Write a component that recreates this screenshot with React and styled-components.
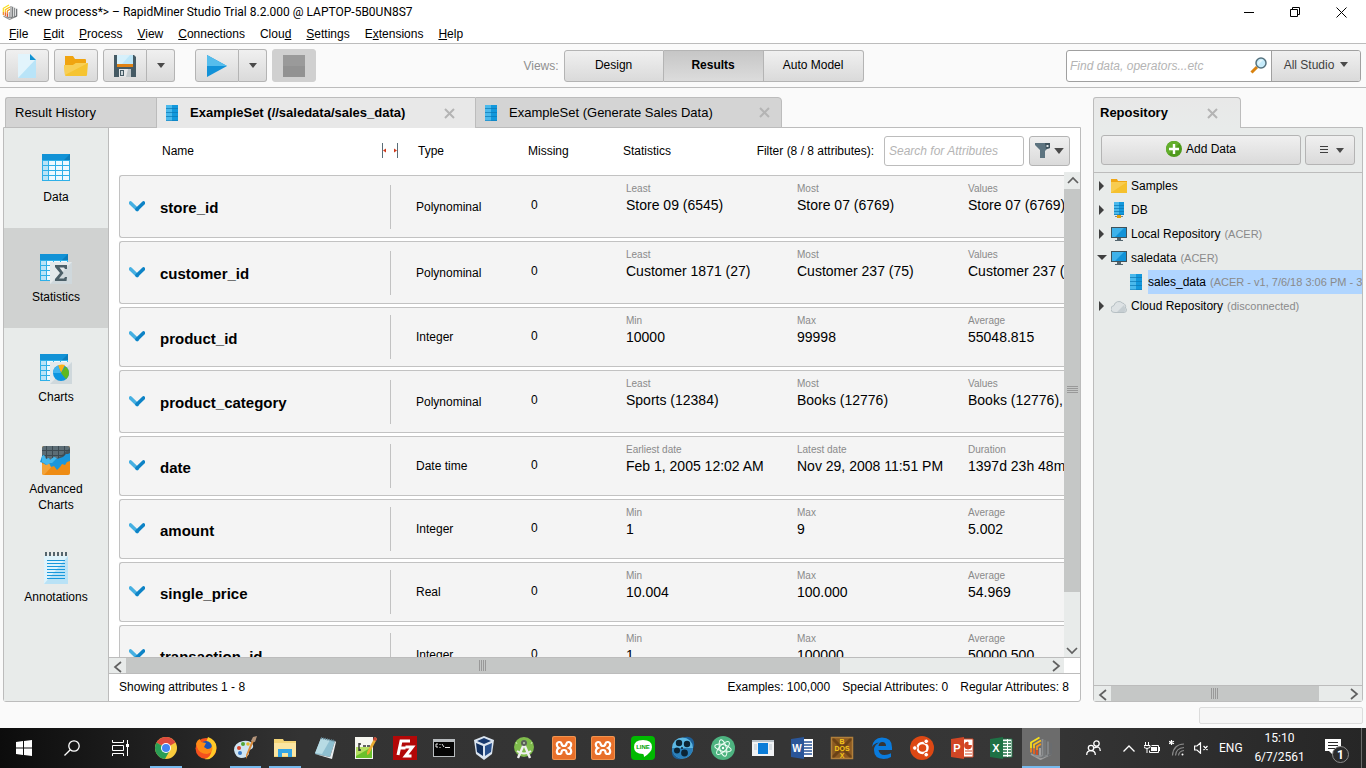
import styled, { createGlobalStyle, css } from 'styled-components';

const menus = [
  ['', 'F', 'ile'],
  ['', 'E', 'dit'],
  ['', 'P', 'rocess'],
  ['', 'V', 'iew'],
  ['', 'C', 'onnections'],
  ['Clou', 'd', ''],
  ['', 'S', 'ettings'],
  ['E', 'x', 'tensions'],
  ['', 'H', 'elp'],
];

const attributes = [
  {
    name: 'store_id',
    type: 'Polynominal',
    stats: [
      ['Least', 'Store 09 (6545)'],
      ['Most', 'Store 07 (6769)'],
      ['Values', 'Store 07 (6769)'],
    ],
  },
  {
    name: 'customer_id',
    type: 'Polynominal',
    stats: [
      ['Least', 'Customer 1871 (27)'],
      ['Most', 'Customer 237 (75)'],
      ['Values', 'Customer 237 (75)'],
    ],
  },
  {
    name: 'product_id',
    type: 'Integer',
    stats: [
      ['Min', '10000'],
      ['Max', '99998'],
      ['Average', '55048.815'],
    ],
  },
  {
    name: 'product_category',
    type: 'Polynominal',
    stats: [
      ['Least', 'Sports (12384)'],
      ['Most', 'Books (12776)'],
      ['Values', 'Books (12776),'],
    ],
  },
  {
    name: 'date',
    type: 'Date time',
    stats: [
      ['Earliest date', 'Feb 1, 2005 12:02 AM'],
      ['Latest date', 'Nov 29, 2008 11:51 PM'],
      ['Duration', '1397d 23h 48m'],
    ],
  },
  {
    name: 'amount',
    type: 'Integer',
    stats: [
      ['Min', '1'],
      ['Max', '9'],
      ['Average', '5.002'],
    ],
  },
  {
    name: 'single_price',
    type: 'Real',
    stats: [
      ['Min', '10.004'],
      ['Max', '100.000'],
      ['Average', '54.969'],
    ],
  },
  {
    name: 'transaction_id',
    type: 'Integer',
    stats: [
      ['Min', '1'],
      ['Max', '100000'],
      ['Average', '50000.500'],
    ],
  },
];

/* ---------- icons ---------- */

const LogoIcon = ({ size = 16 }) => (
  <svg width={size} height={size} viewBox='0 0 24 24' fill='none' strokeWidth='1.800'>
    <path d='M2 12V6.500L10.500 1.500' stroke='#f8e01c' />
    <path d='M2 12v4.500' stroke='#f08a1c' />
    <path d='M5 12.500V8.500L12 4.500' stroke='#fbc31a' />
    <path d='M5 12.500V18' stroke='#e8641e' />
    <path d='M8 14v-3.500L12 8' stroke='#f3941c' />
    <path d='M8 14v5.500' stroke='#dc4a20' />
    <path d='M11 12v8' stroke='#a8a8a8' />
    <path d='M2 18l9.500 5.200L22 18' stroke='#9c9c9c' />
    <path d='M5 19.500l6.500 1 2-1V3' stroke='#8c8e90' />
    <path d='M13 21.500l3-2V4' stroke='#75787a' />
    <path d='M16 20.500l3-1.500V5.500' stroke='#85888a' />
    <path d='M19 19.500l3-1.500V7' stroke='#6a6d70' />
  </svg>
);

const NewIcon = () => (
  <svg width='18' height='24' viewBox='0 0 18 24'>
    <path d='M0 0h12l6 6v18H0z' fill='#b9e4f8' />
    <path d='M0 0h12l5 6L0 24z' fill='#e2f4fc' />
    <path d='M12 0l6 6h-6z' fill='#1292d2' />
  </svg>
);

const OpenIcon = () => (
  <svg width='24' height='20' viewBox='0 0 24 20'>
    <path d='M1 0h8l2 3h10q1 0 1 1v14H1z' fill='#f0a410' />
    <path d='M0 9h9l3-2h12l-1 12q0 1-1 1H2q-1 0-1-1z' fill='#f6c431' />
    <path d='M0 9h9l3-2h12L1 19z' fill='#f8cf55' />
  </svg>
);

const SaveIcon = () => (
  <svg width='22' height='22' viewBox='0 0 22 22'>
    <path d='M0 0h20l2 2v20H0z' fill='#455a64' />
    <path d='M3 0h16v9H3z' fill='#bde6f8' />
    <path d='M3 0h13L8 9H3z' fill='#d6f0fb' />
    <path d='M3 9h16v3H3z' fill='#e08214' />
    <path d='M5 14h12v8H5z' fill='#e5e7e8' />
    <path d='M6 15h4v6H6z' fill='#455a64' />
    <path d='M7 16h2v4H7z' fill='#cfd8dc' />
    <path d='M14 14h3v8h-5z' fill='#bfc6c9' />
  </svg>
);

const PlayIcon = () => (
  <svg width='20' height='22' viewBox='0 0 20 22'>
    <path d='M0 0l20 11L0 22z' fill='#1292d8' />
    <path d='M0 0l20 11H0z' fill='#56bdec' />
  </svg>
);

const StopIcon = () => (
  <svg width='22' height='22' viewBox='0 0 22 22'>
    <path d='M0 0h22v22H0z' fill='#929292' />
    <path d='M0 0h22v11H0z' fill='#9a9a9a' />
  </svg>
);

const Caret = ({ width = 8 }) => (
  <svg width={width} height={width === 8 ? 5 : 6} viewBox='0 0 8 5'>
    <path d='M0 0h8L4 5z' fill='#4a4a4a' />
  </svg>
);

const CloseIcon = () => (
  <svg width='11' height='11' viewBox='0 0 11 11' fill='none' stroke='#b4b4b4' strokeWidth='2'>
    <path d='M1 1l9 9M10 1l-9 9' />
  </svg>
);

const StackIcon = () => (
  <svg width='12' height='16' viewBox='0 0 12 16'>
    <path d='M0 0h12v16H0z' fill='#1398dc' />
    <path d='M0 0h6v16H0z' fill='#4ab9ec' />
    <path d='M0 3.500h12M0 7.500h12M0 11.500h12' stroke='#0b78b4' strokeOpacity='.7' />
    <path d='M0 15.500h12' stroke='#0b78b4' strokeOpacity='.5' />
  </svg>
);

const SearchIcon = () => (
  <svg width='17' height='17' viewBox='0 0 17 17'>
    <path d='M1.500 15.500L7 10' stroke='#d9820f' strokeWidth='3' />
    <circle cx='11' cy='6' r='5' fill='#c6ebfa' stroke='#55727f' strokeWidth='1.500' />
    <path d='M8 8a4 4 0 0 1 5-5z' fill='#e6f7fd' />
  </svg>
);

const GridBase = () => (
  <>
    <path d='M0 0h28v27H0z' fill='#2fb0e8' />
    <path d='M0 0h28v6H0z' fill='#1192d6' />
    <path d='M22 6l6-6v6z' fill='#0b7dbb' />
    <path d='M1 7h5v4H1zM1 12h5v4H1zM1 17h5v4H1zM1 22h5v4H1z' fill='#b9e4f7' />
    <path
      d='M7 7h6v4H7zM14 7h6v4h-6zM21 7h6v4h-6zM7 12h6v4H7zM14 12h6v4h-6zM21 12h6v4h-6zM7 17h6v4H7zM14 17h6v4h-6zM21 17h6v4h-6zM7 22h6v4H7zM14 22h6v4h-6zM21 22h6v4h-6z'
      fill='#eefaff'
    />
  </>
);

const DataIcon = () => (
  <svg width='32' height='32' viewBox='-2 -2 32 32'>
    <GridBase />
  </svg>
);

const StatisticsIcon = () => (
  <svg width='32' height='32' viewBox='0 -2 32 32'>
    <GridBase />
    <path d='M10 8h22v22H10z' fill='#cfd8dc' />
    <path d='M10 8h22L10 30z' fill='#e4e9eb' />
    <path d='M15 11h12v4h-2l-1-1.500h-4.500l4 5.500-4.500 5.500h5L25 23h2l-.5 4H15v-2l5-6-5-6z' fill='#4b5f68' />
  </svg>
);

const ChartsIcon = () => (
  <svg width='32' height='32' viewBox='0 -2 32 32'>
    <GridBase />
    <path d='M10 8h22v22H10z' fill='#cfd8dc' />
    <path d='M10 8h22L10 30z' fill='#e4e9eb' />
    <circle cx='21' cy='19' r='8' fill='#0d95e0' />
    <path d='M21 19l-3-7.400a8 8 0 0 1 7-.6z' fill='#fbb117' />
    <path d='M21 19l4.500-6.600a8 8 0 0 1 .5 12.800z' fill='#5fb81f' />
    <path d='M21 19h-8a8 8 0 0 1 5-7.400z' fill='#43b4ee' />
  </svg>
);

const AdvancedIcon = () => (
  <svg width='32' height='32' viewBox='-2 -2 32 32'>
    <rect width='28' height='29' rx='2' fill='#ee8c14' />
    <path d='M0 18v9q0 2 2 2L13 17z' fill='#f3a338' />
    <path d='M2 0h24q2 0 2 2v12H0V2q0-2 2-2z' fill='#5c6d76' />
    <path d='M28 2v12H14z' fill='#46555d' />
    <path d='M0 4.500h28M0 9.500h28M4.500 0v13M10.500 0v13M16.500 0v13M22.500 0v13' stroke='#3c4a52' />
    <path
      d='M0 10l2-1 2 4 3-1 1 2 4-3 3 2 3-1 3-1 3-3 2 0 2-1v8l-3 1-2 3-3-1-2 3-3 3-3-4-3 1-2-4-3 2-3-2-3-1z'
      fill='#1b97dc'
    />
    <path d='M0 10l2-1 2 4 3-1 1 2 4-3 3 1-5 5-2 0-3 2-3-2-2-1z' fill='#45b7ec' />
  </svg>
);

const NotesIcon = () => (
  <svg width='24' height='32' viewBox='0 0 24 32'>
    <path d='M0 4h24v28H0z' fill='#b9e2f6' />
    <path d='M0 4h24L0 32z' fill='#def3fc' />
    <path d='M2 0v4M6 0v4M10 0v4M14 0v4M18 0v4M22 0v4' stroke='#55656d' strokeWidth='2' />
    <path
      d='M3 8.500h18M3 11.500h18M3 14.500h18M3 17.500h18M3 20.500h18M3 23.500h18M3 26.500h18'
      stroke='#1798dc'
    />
  </svg>
);

const ChevronIcon = () => (
  <svg width='16' height='11' viewBox='0 0 16 11' fill='none' strokeWidth='3.600'>
    <path d='M1.500 2L8.300 8.500' stroke='#46b0e2' strokeLinecap='round' />
    <path d='M14.500 2L8 8.300' stroke='#0d83c6' strokeLinecap='round' />
  </svg>
);

const ResizeIcon = () => (
  <svg width='16' height='15' viewBox='0 0 16 15'>
    <path d='M.5 0v15M15.500 0v15' stroke='#5a6e78' />
    <path d='M1 7.500l3-2v4zM15 7.500l-3-2v4z' fill='#cf3a1c' />
  </svg>
);

const FunnelIcon = () => (
  <svg width='15' height='15' viewBox='0 0 15 15'>
    <path d='M0 0h15v5l-3 1-2 2v7H5V7L0 2z' fill='#5d7480' />
    <path d='M10 0h5v5l-4 1z' fill='#3f525c' />
    <path d='M11.500 2h2v2h-2z' fill='#dfe5e8' />
  </svg>
);

const PlusIcon = () => (
  <svg width='16' height='16' viewBox='0 0 16 16'>
    <circle cx='8' cy='8' r='8' fill='#4e9a1c' />
    <path d='M2.300 13.700A8 8 0 0 1 13.700 2.300z' fill='#63ae2c' />
    <path d='M8 3v10M3 8h10' stroke='#fff' strokeWidth='2.400' />
  </svg>
);

const FolderIcon = () => (
  <svg width='16' height='14' viewBox='0 0 16 14'>
    <path d='M0 0h6l1 2h9v12H0z' fill='#f0a614' />
    <path d='M0 3h16v11H0z' fill='#f5c12e' />
    <path d='M0 3h16L1 13H0z' fill='#f8cc50' />
  </svg>
);

const DbIcon = () => (
  <svg width='16' height='16' viewBox='0 0 16 16'>
    <path d='M3 0h10v13H3z' fill='#1398dc' />
    <path d='M3 0h5v13H3z' fill='#4ab9ec' />
    <path d='M3 3.500h10M3 6.500h10M3 9.500h10M3 12.500h10' stroke='#0b78b4' strokeOpacity='.7' />
    <path d='M4 14.500h8' stroke='#7a868c' />
    <path d='M6 13h4v3H6z' fill='#e0a010' />
  </svg>
);

const ScreenIcon = () => (
  <svg width='16' height='14' viewBox='0 0 16 14'>
    <path d='M0 0h16v11H0z' fill='#3f525b' />
    <path d='M1 1h14v9H1z' fill='#1293d8' />
    <path d='M1 1h12L4 10H1z' fill='#3fb2ea' />
    <path d='M6 11h4v2h2v1H4v-1h2z' fill='#54656e' />
  </svg>
);

const CloudIcon = () => (
  <svg width='16' height='13' viewBox='0 0 16 13'>
    <path
      d='M4 12.500a3.500 3.500 0 0 1-1-7A5 5 0 0 1 11.500 3a4 4 0 0 1 3 5 2.500 2.500 0 0 1-1 4.500z'
      fill='#dde2e4'
      stroke='#b7c0c4'
    />
    <path d='M13 5L6 12h7q3-1 1-4z' fill='#c6ced2' />
  </svg>
);

const Arrow = ({ dir }) => {
  const d = {
    up: 'M1 8l5-5 5 5',
    down: 'M1 4l5 5 5-5',
    left: 'M9 1L3 6l6 5',
    right: 'M3 1l6 5-6 5',
  }[dir];
  return (
    <svg width='12' height='12' viewBox='0 0 12 12' fill='none' stroke='#606060' strokeWidth='1.700'>
      <path d={d} />
    </svg>
  );
};

const TreeArrow = ({ open }) => (
  <svg width='10' height='10' viewBox='0 0 10 10'>
    <path d={open ? 'M0 2h10L5 7z' : 'M2 0l5 5-5 5z'} fill='#3f3f3f' />
  </svg>
);

/* ---------- task bar icons ---------- */

const TaskIcon = ({ children }) => (
  <svg width='24' height='24' viewBox='0 0 24 24'>
    {children}
  </svg>
);

const Xampp = () => (
  <TaskIcon>
    <rect width='24' height='24' rx='2' fill='#f0934e' />
    <rect x='1' y='1' width='22' height='22' rx='1.500' fill='#e8702a' />
    <path
      d='M9.500 7.500Q9 5.800 7 6 4.800 6.300 4.800 8.800q0 2.200 2 3.200-2 1-2 3.200Q4.800 18 7.300 18q2.200 0 2.200-1.700 0-2.300 2.500-2.300t2.500 2.300q0 1.700 2.200 1.700 2.500 0 2.500-2.800 0-2.200-2-3.200 2-1 2-3.200 0-2.500-2.200-2.800-2-.2-2.500 1.500-.3 2.500-2.500 2.500T9.500 7.500z'
      fill='none'
      stroke='#fff'
      strokeWidth='2.200'
    />
  </TaskIcon>
);

const tasks = [
  {
    name: 'Chrome',
    running: true,
    icon: (
      <TaskIcon>
        <circle cx='12' cy='12' r='11' fill='#f9cb3c' />
        <path d='M12 12L2.500 6.500a11 11 0 0 1 19 0z' fill='#dd4b3e' />
        <path d='M2.500 6.500A11 11 0 0 0 11 23l4.500-8L12 12z' fill='#2a9e56' />
        <circle cx='12' cy='12' r='5' fill='#fff' />
        <circle cx='12' cy='12' r='4' fill='#4385f2' />
      </TaskIcon>
    ),
  },
  {
    name: 'Firefox',
    icon: (
      <TaskIcon>
        <circle cx='12' cy='12.500' r='10.500' fill='#f5511e' />
        <path d='M14 1q8 3 8.500 10 0 8-7 12-3 .5-5 0 7-2 7-9 0-6-5-9z' fill='#ffc928' />
        <circle cx='12' cy='11' r='6' fill='#1c54b8' />
        <path d='M2 8q1-4 4-5l1 3 5 1-2 4 3 2q5 0 5-4 2 8-5 9-8 0-10-7z' fill='#ff8a16' />
      </TaskIcon>
    ),
  },
  {
    name: 'Paint',
    running: true,
    icon: (
      <TaskIcon>
        <path d='M1 14q0-7 9-9 8-1 10 4 1 4-4 5-1 1 0 4-2 4-8 4-6-1-7-8z' fill='#cfe4f2' />
        <circle cx='6' cy='12' r='2' fill='#d6452c' />
        <circle cx='10' cy='8' r='2' fill='#52a637' />
        <circle cx='15' cy='8' r='1.800' fill='#e9b92d' />
        <circle cx='7' cy='17' r='2' fill='#3777c4' />
        <path d='M21 5l-7 16-1 2 0-4 6-15z' fill='#d98a3b' />
        <path d='M18 5l2-4 4-1-2 6z' fill='#b4947a' />
      </TaskIcon>
    ),
  },
  {
    name: 'File Explorer',
    running: true,
    icon: (
      <TaskIcon>
        <path d='M1 3h9l1 2h12v16H1z' fill='#f3d477' />
        <path d='M1 7h22v13H1z' fill='#fbe5a1' />
        <path d='M5 21v-8h14v8h-4v-4H9v4z' fill='#33a5e6' />
      </TaskIcon>
    ),
  },
  {
    name: 'Notepad',
    icon: (
      <TaskIcon>
        <path d='M8 2l14 3-5 16-15-3z' fill='#8ebfd0' />
        <path d='M8 2l9 2-8 14-7-1z' fill='#b7dbe4' />
        <path d='M2 18l15 3 5-16 1 1-4 17z' fill='#e9eef0' />
        <path d='M8 2l14 3' stroke='#5e7f8e' strokeWidth='2' strokeDasharray='1 1' />
      </TaskIcon>
    ),
  },
  {
    name: 'Notepad++',
    icon: (
      <TaskIcon>
        <path d='M2 1h18v22H2z' fill='#f6f6f0' />
        <path d='M3 11h16v11H3z' fill='#6ac12c' />
        <path d='M3 11h16L3 20z' fill='#b5df62' />
        <path d='M6 7v8M6 8h2M6 14h2M10 10h3M14 10h3' stroke='#303030' strokeWidth='1.400' />
        <path d='M22 1l2 2-8 15-2 1 0-3z' fill='#e9ab32' />
        <path d='M21 1l3 1-1 3-3-1z' fill='#c8483b' />
      </TaskIcon>
    ),
  },
  {
    name: 'FileZilla',
    icon: (
      <TaskIcon>
        <path d='M0 0h24v24H0z' fill='#b30808' />
        <path d='M5 19L8 5h9M6.500 12h6M12.500 11h7l-7 9h6' fill='none' stroke='#fff' strokeWidth='3' />
      </TaskIcon>
    ),
  },
  {
    name: 'Command Prompt',
    icon: (
      <TaskIcon>
        <path d='M1 3h22v18H1z' fill='#b9bdc0' />
        <path d='M2 6h20v14H2z' fill='#050505' />
        <path d='M4 8v3M4 8h2M4 11h2M8 8v1M8 11v1M10 8l2 3M13 11.500h5' stroke='#e8e8e8' fill='none' />
      </TaskIcon>
    ),
  },
  {
    name: 'VirtualBox',
    icon: (
      <TaskIcon>
        <path d='M12 0l10 4-2 14-8 6-8-6L2 4z' fill='#dbe5f0' />
        <path d='M12 2l7 3-7 3-7-3z' fill='#18396e' />
        <path d='M4 7l7 3v10l-6-4z' fill='#12305f' />
        <path d='M20 7l-7 3v10l6-4z' fill='#28508c' />
      </TaskIcon>
    ),
  },
  {
    name: 'Android Studio',
    icon: (
      <TaskIcon>
        <circle cx='12' cy='11' r='10' fill='#7fbb4c' />
        <path d='M5 8l-1-2M19 8l1-2' stroke='#c8e5ae' />
        <path d='M12 8L6 22M12 8l6 14' stroke='#f0f0f0' strokeWidth='2.400' />
        <path d='M5 15q7 5 14 0' stroke='#f0f0f0' strokeWidth='2' fill='none' />
        <circle cx='12' cy='7' r='3' fill='#5a5f5a' />
        <circle cx='12' cy='7' r='1' fill='#b8c8b0' />
      </TaskIcon>
    ),
  },
  { name: 'XAMPP Control', icon: <Xampp /> },
  { name: 'XAMPP', icon: <Xampp /> },
  {
    name: 'Line',
    icon: (
      <TaskIcon>
        <rect width='24' height='24' rx='4' fill='#00b900' />
        <path d='M12 4q9 0 9 7 0 5-8 10 0-3-1-3-9 0-9-7 0-7 9-7z' fill='#fff' />
        <text x='12' y='13' textAnchor='middle' fontSize='6' fontWeight='700' fill='#00a000'>
          LINE
        </text>
      </TaskIcon>
    ),
  },
  {
    name: 'Player',
    icon: (
      <TaskIcon>
        <ellipse cx='12' cy='12' rx='13' ry='9' transform='rotate(-45 12 12)' fill='#1d5f96' />
        <circle cx='11.500' cy='12' r='10.500' fill='#5cb8e4' />
        <path d='M1 12a10.500 10.500 0 0 0 21 0z' fill='#2a7fba' />
        <circle cx='8' cy='7' r='3.200' fill='#0c2434' />
        <circle cx='16' cy='8' r='3.200' fill='#0c2434' />
        <circle cx='6' cy='14.500' r='3' fill='#0c2434' />
        <circle cx='13.500' cy='17' r='3.400' fill='#0c2434' />
        <circle cx='11' cy='12' r='1' fill='#0c2434' />
      </TaskIcon>
    ),
  },
  {
    name: 'Atom',
    icon: (
      <TaskIcon>
        <circle cx='12' cy='12' r='12' fill='#4db380' />
        <g fill='none' stroke='#f0fff6'>
          <ellipse cx='12' cy='12' rx='8.500' ry='3.300' transform='rotate(15 12 12)' />
          <ellipse cx='12' cy='12' rx='8.500' ry='3.300' transform='rotate(75 12 12)' />
          <ellipse cx='12' cy='12' rx='8.500' ry='3.300' transform='rotate(-45 12 12)' />
        </g>
        <circle cx='12' cy='12' r='1.200' fill='#fff' />
      </TaskIcon>
    ),
  },
  {
    name: 'Window',
    icon: (
      <TaskIcon>
        <path d='M1 4h22v16H1z' fill='#f0f2f4' />
        <path d='M1 4h22v2H1z' fill='#b8c1c8' />
        <path d='M7 7h10v11H7z' fill='#0b7cd8' />
        <path d='M3 9h3M3 11h3M3 13h3M18 9h3M18 11h3M18 13h3' stroke='#bcc7cf' />
      </TaskIcon>
    ),
  },
  {
    name: 'Word',
    icon: (
      <TaskIcon>
        <path d='M11 3h12v18H11z' fill='#fff' />
        <path d='M14 6h8M14 9h8M14 12h8M14 15h8M14 18h8' stroke='#2a5699' strokeWidth='1.500' />
        <path d='M1 3l13-2v22L1 21z' fill='#2a5699' />
        <text x='7' y='16' textAnchor='middle' fontSize='10' fontWeight='700' fill='#fff'>
          W
        </text>
      </TaskIcon>
    ),
  },
  {
    name: 'DOSBox',
    icon: (
      <TaskIcon>
        <path d='M1 1h22v22H1z' fill='#8b5a22' />
        <path d='M2 2l20 20M22 2L2 22' stroke='#6b4216' strokeWidth='3' />
        <path d='M1.500 1.500h21v21h-21z' fill='none' stroke='#b17f3b' strokeWidth='1.500' />
        <g fontSize='7' fontWeight='700' fill='#f5c518' textAnchor='middle'>
          <text x='12' y='7.500'>B</text>
          <text x='12' y='14.500'>DOS</text>
          <text x='12' y='21.500'>X</text>
        </g>
      </TaskIcon>
    ),
  },
  {
    name: 'Edge',
    icon: (
      <TaskIcon>
        <path
          d='M2 11Q3 2 12 1.500q10 0 10 10V14H8.500q1 5 6 5 3.500 0 6.500-1.700V21q-3 2-7.500 2Q4 22.500 4 14q0-5 5-7.500Q4 7 2 11zM8.500 10H16q0-4-3.700-4Q9 6 8.500 10z'
          fill='#0a7bdc'
        />
      </TaskIcon>
    ),
  },
  {
    name: 'Ubuntu',
    icon: (
      <TaskIcon>
        <circle cx='12' cy='12' r='12' fill='#dd4814' />
        <circle cx='12.500' cy='12' r='5' fill='none' stroke='#fff' strokeWidth='2.400' />
        <g fill='#fff' stroke='#dd4814'>
          <circle cx='4.800' cy='12' r='2.300' />
          <circle cx='16.200' cy='5.300' r='2.300' />
          <circle cx='16.200' cy='18.700' r='2.300' />
        </g>
      </TaskIcon>
    ),
  },
  {
    name: 'PowerPoint',
    icon: (
      <TaskIcon>
        <path d='M11 3h12v18H11z' fill='#fff' stroke='#d24625' />
        <path d='M18 6a3.500 3.500 0 1 0 3.500 3.500H18zM15 15h7M15 18h7' fill='#d24625' stroke='#d24625' />
        <path d='M1 3l13-2v22L1 21z' fill='#d24625' />
        <text x='7' y='16' textAnchor='middle' fontSize='11' fontWeight='700' fill='#fff'>
          P
        </text>
      </TaskIcon>
    ),
  },
  {
    name: 'Excel',
    icon: (
      <TaskIcon>
        <path d='M11 3h12v18H11z' fill='#fff' stroke='#1e7145' />
        <path d='M14 6h8M14 9h8M14 12h8M14 15h8M14 18h8' stroke='#1e7145' strokeWidth='1.600' />
        <path d='M18.500 3v18' stroke='#fff' />
        <path d='M1 3l13-2v22L1 21z' fill='#1e7145' />
        <text x='7' y='16' textAnchor='middle' fontSize='11' fontWeight='700' fill='#fff'>
          X
        </text>
      </TaskIcon>
    ),
  },
  { name: 'RapidMiner', running: true, active: true, icon: <LogoIcon size={24} /> },
];

/* ---------- building blocks ---------- */

const ScrollBar = ({ vertical, thumb, rest }) => (
  <ScrollTrack $vertical={vertical}>
    <ScrollEnd type='button' aria-label='Scroll back'>
      <Arrow dir={vertical ? 'up' : 'left'} />
    </ScrollEnd>
    <ScrollThumb $size={thumb}>
      <Grip $vertical={vertical} />
    </ScrollThumb>
    <ScrollRest $size={rest} />
    <ScrollEnd type='button' aria-label='Scroll forward'>
      <Arrow dir={vertical ? 'down' : 'right'} />
    </ScrollEnd>
  </ScrollTrack>
);

const SideItem = ({ icon, label, selected }) => (
  <SideButton type='button' $selected={selected}>
    {icon}
    <span>{label}</span>
  </SideButton>
);

const TreeItem = ({ icon, label, note, open }) => (
  <TreeRow>
    <TreeArrow open={open} />
    <TreeIcon>{icon}</TreeIcon>
    <span>{label}</span>
    {note && <Note>{note}</Note>}
  </TreeRow>
);

const Attribute = ({ name, type, stats }) => (
  <AttributeRow $tall={type === 'Polynominal'}>
    <td>
      <NameCell>
        <Expand type='button' aria-label={`Open ${name}`}>
          <ChevronIcon />
        </Expand>
        {name}
      </NameCell>
    </td>
    <TypeCell>{type}</TypeCell>
    <MissingCell>0</MissingCell>
    {stats.map(([label, value]) => (
      <StatCell key={label}>
        <small>{label}</small>
        <span>{value}</span>
      </StatCell>
    ))}
  </AttributeRow>
);

const App = () => {
  return (
    <Window>
      <GlobalStyle />
      <TitleBar>
        <LogoIcon />
        <h1>&lt;new process*&gt; – RapidMiner Studio Trial 8.2.000 @ LAPTOP-5B0UN8S7</h1>
        <WindowButton type='button' aria-label='Minimize'>
          <svg width='11' height='11' viewBox='0 0 11 11' stroke='#000'>
            <path d='M0 5.500h10' />
          </svg>
        </WindowButton>
        <WindowButton type='button' aria-label='Restore'>
          <svg width='11' height='11' viewBox='0 0 11 11' fill='none' stroke='#000'>
            <path d='M.5 2.500h7v7h-7zM2.500 2.500v-2h7v7h-2' />
          </svg>
        </WindowButton>
        <WindowButton type='button' aria-label='Close'>
          <svg width='11' height='11' viewBox='0 0 11 11' stroke='#000'>
            <path d='M.5.5l10 10M10.500.5l-10 10' />
          </svg>
        </WindowButton>
      </TitleBar>

      <MenuBar>
        {menus.map(([before, key, after]) => (
          <button type='button' key={before + key + after}>
            {before}
            <u>{key}</u>
            {after}
          </button>
        ))}
      </MenuBar>

      <Toolbar>
        <ToolGroup>
          <ToolButton type='button' aria-label='New'>
            <NewIcon />
          </ToolButton>
          <ToolButton type='button' aria-label='Open'>
            <OpenIcon />
          </ToolButton>
          <Split>
            <ToolButton type='button' aria-label='Save'>
              <SaveIcon />
            </ToolButton>
            <ToolButton type='button' aria-label='Save options' $narrow>
              <Caret />
            </ToolButton>
          </Split>
        </ToolGroup>
        <ToolGroup>
          <Split>
            <ToolButton type='button' aria-label='Run'>
              <PlayIcon />
            </ToolButton>
            <ToolButton type='button' aria-label='Run options' $narrow>
              <Caret />
            </ToolButton>
          </Split>
          <ToolButton type='button' aria-label='Stop' $off>
            <StopIcon />
          </ToolButton>
        </ToolGroup>
        <Views>
          <span>Views:</span>
          <Split>
            <ViewButton type='button'>Design</ViewButton>
            <ViewButton type='button' $selected>
              Results
            </ViewButton>
            <ViewButton type='button'>Auto Model</ViewButton>
          </Split>
        </Views>
        <GlobalSearch>
          <input aria-label='Find data' placeholder='Find data, operators...etc' />
          <SearchIcon />
          <button type='button'>
            All Studio <Caret />
          </button>
        </GlobalSearch>
      </Toolbar>

      <Main>
        <Results>
          <Tabs $inset>
            <Tab $width={151}>
              <span>Result History</span>
            </Tab>
            <Tab $width={319} $selected>
              <StackIcon />
              <span>ExampleSet (//saledata/sales_data)</span>
              <TabClose type='button' aria-label='Close tab'>
                <CloseIcon />
              </TabClose>
            </Tab>
            <Tab $width={307}>
              <StackIcon />
              <span>ExampleSet (Generate Sales Data)</span>
              <TabClose type='button' aria-label='Close tab'>
                <CloseIcon />
              </TabClose>
            </Tab>
          </Tabs>
          <ResultPanel>
            <Sidebar>
              <SideItem icon={<DataIcon />} label='Data' />
              <SideItem icon={<StatisticsIcon />} label='Statistics' selected />
              <SideItem icon={<ChartsIcon />} label='Charts' />
              <SideItem icon={<AdvancedIcon />} label='Advanced Charts' />
              <SideItem icon={<NotesIcon />} label='Annotations' />
            </Sidebar>
            <Content>
              <Columns>
                <ColumnName>
                  Name
                  <ResizeIcon />
                </ColumnName>
                <ColumnType>Type</ColumnType>
                <ColumnMissing>Missing</ColumnMissing>
                <ColumnStats>Statistics</ColumnStats>
                <label htmlFor='attribute-search'>Filter (8 / 8 attributes):</label>
                <AttributeSearch id='attribute-search' placeholder='Search for Attributes' />
                <FilterButton type='button' aria-label='Filter'>
                  <FunnelIcon />
                  <Caret width={10} />
                </FilterButton>
              </Columns>
              <ScrollArea>
                <Viewport>
                  <Table>
                    <colgroup>
                      <col width='272' />
                      <col width='140' />
                      <col width='95' />
                      <col width='171' />
                      <col width='171' />
                      <col width='311' />
                    </colgroup>
                    <tbody>
                      {attributes.map((attribute) => (
                        <Attribute key={attribute.name} {...attribute} />
                      ))}
                    </tbody>
                  </Table>
                </Viewport>
                <ScrollBar vertical thumb={402} rest={50} />
              </ScrollArea>
              <BottomScroll>
                <ScrollBar thumb={713} rest={208} />
              </BottomScroll>
              <Summary>
                <span>Showing attributes 1 - 8</span>
                <span>Examples: 100,000</span>
                <span>Special Attributes: 0</span>
                <span>Regular Attributes: 8</span>
              </Summary>
            </Content>
          </ResultPanel>
        </Results>

        <Repository>
          <Tabs>
            <Tab $width={148} $selected $tinted>
              <span>Repository</span>
              <TabClose type='button' aria-label='Close tab'>
                <CloseIcon />
              </TabClose>
            </Tab>
          </Tabs>
          <RepositoryPanel>
            <RepositoryTools>
              <AddButton type='button'>
                <PlusIcon />
                Add Data
              </AddButton>
              <MenuButton type='button' aria-label='Repository menu'>
                <svg width='8' height='8' viewBox='0 0 8 8' stroke='#3f3f3f'>
                  <path d='M0 .5h8M0 3.500h8M0 6.500h8' />
                </svg>
                <Caret />
              </MenuButton>
            </RepositoryTools>
            <Tree>
              <TreeItem icon={<FolderIcon />} label='Samples' />
              <TreeItem icon={<DbIcon />} label='DB' />
              <TreeItem icon={<ScreenIcon />} label='Local Repository' note='(ACER)' />
              <TreeItem icon={<ScreenIcon />} label='saledata' note='(ACER)' open />
              <TreeRow $child>
                <TreeIcon>
                  <StackIcon />
                </TreeIcon>
                <SelectedEntry>
                  sales_data
                  <Note>(ACER - v1, 7/6/18 3:06 PM - 3</Note>
                </SelectedEntry>
              </TreeRow>
              <TreeItem icon={<CloudIcon />} label='Cloud Repository' note='(disconnected)' />
            </Tree>
            <ScrollBar thumb={207} rest={27} />
          </RepositoryPanel>
        </Repository>
      </Main>

      <StatusBar>
        <div />
      </StatusBar>

      <Taskbar>
        <SystemButtons>
          <button type='button' aria-label='Start'>
            <svg width='16' height='16' viewBox='0 0 16 16' fill='#fff'>
              <path d='M0 2l7-1v6.500H0zM8 1l8-1v7.500H8zM0 8.500h7V15l-7-1zM8 8.500h8V16l-8-1z' />
            </svg>
          </button>
          <button type='button' aria-label='Search'>
            <svg width='16' height='16' viewBox='0 0 16 16' fill='none' stroke='#fff' strokeWidth='1.300'>
              <circle cx='10' cy='6' r='5.200' />
              <path d='M6.300 9.700L.5 15.500' />
            </svg>
          </button>
          <button type='button' aria-label='Task view'>
            <svg width='17' height='16' viewBox='0 0 17 16' fill='none' stroke='#fff'>
              <path d='M.5 0v2.500h11V0M.5 16v-2.500h11V16M.5 5.500h11v5H.5zM15.500 0v16' />
              <path d='M14 4h3v3h-3z' fill='#fff' stroke='none' />
            </svg>
          </button>
        </SystemButtons>
        <Tasks>
          {tasks.map(({ name, icon, running, active }) => (
            <Task type='button' key={name} aria-label={name} $running={running} $active={active}>
              {icon}
            </Task>
          ))}
        </Tasks>
        <Tray>
          <People>
            <svg width='15' height='16' viewBox='0 0 15 16' fill='none' stroke='#fff' strokeWidth='1.300'>
              <circle cx='10.500' cy='3.500' r='2.700' />
              <path d='M8 8q6-3 6.300 3' />
              <circle cx='5' cy='8' r='2.700' />
              <path d='M.7 15q0-4.300 4.300-4.300T9.300 15' />
            </svg>
          </People>
          <TrayIcons>
            <svg width='12' height='7' viewBox='0 0 12 7' fill='none' stroke='#fff' strokeWidth='1.300'>
              <path d='M.5 6.500L6 1l5.500 5.500' />
            </svg>
            <svg width='16' height='12' viewBox='0 0 16 12' fill='none' stroke='#fff'>
              <path d='M1.500 0v3M4.500 0v3M0 3.500h6v2q-3 2-6 0zM3 6v5' />
              <path d='M5.500 8.500v2h9v-7h-7M15.500 5v4' />
              <path d='M7 5h6v4H7z' fill='#fff' stroke='none' />
            </svg>
            <svg width='16' height='16' viewBox='0 0 16 16' fill='none' stroke='#8a8a8a' strokeWidth='1.200'>
              <path d='M3.500 15.500Q4 4.500 15 4M6.500 15.500Q7 8 15 7.500M9.500 15.500q.5-4.500 5.500-5' />
              <circle cx='13.500' cy='14.500' r='1' fill='#fff' stroke='none' />
              <path d='M2.500 0v5M0 1.200l5 2.600M5 1.200L0 3.800' stroke='#fff' />
            </svg>
            <svg width='15' height='12' viewBox='0 0 15 12' fill='none' stroke='#fff' strokeWidth='1.200'>
              <path d='M.6 4h2.400L6.500.8v10.400L3 8H.6zM9.500 4l4 4M13.500 4l-4 4' />
            </svg>
          </TrayIcons>
          <span>ENG</span>
          <Clock>
            <span>15:10</span>
            <span>6/7/2561</span>
          </Clock>
          <Notifications type='button' aria-label='Notifications'>
            <svg width='24' height='24' viewBox='0 0 24 24'>
              <path d='M0 0h16v12H8v4l-4-4H0z' fill='#fff' />
              <path d='M3 3.500h10M3 6.500h10M3 9.500h7' stroke='#2b2b2b' />
              <circle cx='15.500' cy='15.500' r='8' fill='#2b2b2b' stroke='#8c8c8c' />
              <text x='15.500' y='19.500' textAnchor='middle' fontSize='12' fontWeight='700' fill='#fff'>
                1
              </text>
            </svg>
          </Notifications>
        </Tray>
      </Taskbar>
    </Window>
  );
};

/* ---------- styles ---------- */

const GlobalStyle = createGlobalStyle`
  * {
    box-sizing: border-box;
  }
  body {
    margin: 0;
    background: #fafafa;
    color: #000;
    font: 12px/16px 'Liberation Sans', Arial, sans-serif;
  }
  button, input {
    font: inherit;
    color: inherit;
    margin: 0;
    padding: 0;
    border: 0;
    background: none;
  }
  svg {
    display: block;
    flex: none;
  }
`;

const raised = css`
  border: 1px solid #b4b4b4;
  border-radius: 3px;
  background: linear-gradient(#f0f0f0, #dadada);
`;

const Window = styled.div`
  display: flex;
  flex-direction: column;
  height: 100vh;
`;

const TitleBar = styled.header`
  display: flex;
  align-items: center;
  height: 24px;
  padding: 0 2px;
  background: #fff;

  h1 {
    flex: 1;
    margin: 0 0 0 6px;
    font: 12px/16px Roboto, 'Open Sans', sans-serif;
  }
`;

const WindowButton = styled.button`
  display: flex;
  align-items: center;
  justify-content: center;
  width: 46px;
  height: 20px;
`;

const MenuBar = styled.nav`
  display: flex;
  gap: 15px;
  height: 20px;
  padding: 0 9px;
  background: #fff;
  border-bottom: 1px solid #bcbcbc;
`;

const Toolbar = styled.div`
  display: flex;
  align-items: center;
  height: 44px;
  padding: 0 5px;
  border-bottom: 1px solid #bcbcbc;
`;

const ToolGroup = styled.div`
  display: flex;
  gap: 5px;
  margin-right: 20px;
`;

const ToolButton = styled.button`
  ${raised}
  display: flex;
  align-items: center;
  justify-content: center;
  width: ${({ $narrow }) => ($narrow ? 28 : 44)}px;
  height: 33px;
  ${({ $off }) => $off && 'background: #d0d0d0; border-color: #d0d0d0;'}
`;

const Split = styled.div`
  display: flex;

  button + button {
    border-left: 0;
  }
  button:not(:last-child) {
    border-top-right-radius: 0;
    border-bottom-right-radius: 0;
  }
  button:not(:first-child) {
    border-top-left-radius: 0;
    border-bottom-left-radius: 0;
  }
`;

const Views = styled.div`
  display: flex;
  flex: 1;
  align-items: center;
  justify-content: center;
  gap: 5px;
  padding-right: 15px;
  color: #8f8f8f;
`;

const ViewButton = styled.button`
  ${raised}
  width: 100px;
  height: 32px;
  padding-bottom: 2px;
  color: #000;
  ${({ $selected }) =>
    $selected &&
    `
    font-weight: 700;
    background: linear-gradient(#c6c6c6, #dcdcdc);
  `}
`;

const GlobalSearch = styled.div`
  display: flex;
  align-items: center;
  width: 295px;
  height: 32px;
  background: #fff;
  border: 1px solid #a0a0a0;
  border-radius: 3px;
  overflow: hidden;

  input {
    flex: 1;
    min-width: 0;
    padding-left: 3px;
  }
  input::placeholder {
    color: #b4b4b4;
    font-style: italic;
  }
  button {
    display: flex;
    align-items: center;
    justify-content: center;
    gap: 6px;
    width: 89px;
    height: 30px;
    margin-left: 4px;
    padding-bottom: 2px;
    color: #3f3f3f;
    border-left: 1px solid #a0a0a0;
    background: linear-gradient(#f0f0f0, #dadada);
  }
`;

const Main = styled.main`
  display: flex;
  flex: 1;
  gap: 12px;
  min-height: 0;
  padding: 9px 3px 0;
`;

const Results = styled.section`
  display: flex;
  flex: 1;
  flex-direction: column;
  min-width: 0;
`;

const Repository = styled.section`
  display: flex;
  flex-direction: column;
  width: 270px;
`;

const Tab = styled.div`
  display: flex;
  align-items: center;
  gap: 12px;
  width: ${({ $width }) => $width}px;
  height: 31px;
  padding: 0 20px 0 9px;
  font-size: 13px;
  background: #d4d4d4;
  border: 1px solid #bcbcbc;
  border-right-width: 0;
  z-index: 1;

  &:last-child {
    padding-right: 11px;
    border-right-width: 1px;
    border-top-right-radius: 4px;
  }
  &:first-child {
    border-top-left-radius: 3px;
  }
  ${({ $selected }) =>
    $selected &&
    `
    font-weight: 700;
    background: #e8e8e8;
    border-bottom: 0;
  `}
  ${({ $tinted }) =>
    $tinted &&
    `
    background: linear-gradient(#e8e8e8, #e8ebea);
    &:first-child {
      padding: 0 22px 0 6px;
    }
  `}
`;

const Tabs = styled.div`
  display: flex;
  height: 30px;
  padding-left: ${({ $inset }) => ($inset ? 2 : 0)}px;
`;

const TabClose = styled.button`
  margin-left: auto;
`;

const ResultPanel = styled.div`
  display: flex;
  flex: 1;
  min-height: 0;
  background: #fff;
  border: 1px solid #bcbcbc;
  border-radius: 0 0 3px 3px;
`;

const Sidebar = styled.nav`
  width: 105px;
  background: #e8ebea;
  border-right: 1px solid #bcbcbc;
`;

const SideButton = styled.button`
  display: flex;
  flex-direction: column;
  align-items: center;
  justify-content: center;
  gap: 5px;
  width: 100%;
  height: 100px;
  padding: 1px 16px 0;
  background: ${({ $selected }) => ($selected ? '#d0d2d1' : 'transparent')};
`;

const Content = styled.div`
  display: flex;
  flex: 1;
  flex-direction: column;
  min-width: 0;
`;

const Columns = styled.div`
  display: flex;
  align-items: center;
  height: 44px;
  padding: 1px 10px 0 53px;
`;

const ColumnName = styled.div`
  display: flex;
  align-items: center;
  justify-content: space-between;
  width: 236px;
`;

const ColumnType = styled.div`
  width: 110px;
  margin-left: 20px;
`;

const ColumnMissing = styled.div`
  width: 95px;
`;

const ColumnStats = styled.div`
  flex: 1;
`;

const AttributeSearch = styled.input`
  width: 140px;
  height: 30px;
  margin: 0 5px 0 10px;
  padding: 0 4px;
  background: #fff;
  border: 1px solid #bcbcbc;
  border-radius: 3px;

  &::placeholder {
    color: #b4b4b4;
    font-style: italic;
  }
`;

const FilterButton = styled.button`
  ${raised}
  display: flex;
  align-items: center;
  justify-content: center;
  gap: 4px;
  width: 41px;
  height: 30px;
`;

const ScrollArea = styled.div`
  display: flex;
  flex: 1;
  min-height: 0;
`;

const Viewport = styled.div`
  flex: 1;
  min-width: 0;
  padding-left: 10px;
  overflow: hidden;
`;

const Table = styled.table`
  width: 1160px;
  table-layout: fixed;
  border-collapse: separate;
  border-spacing: 0 3px;
`;

const AttributeRow = styled.tr`
  height: ${({ $tall }) => ($tall ? 63 : 60)}px;

  td {
    padding: 0;
    background: #f4f4f4;
    border: solid #c2c2c2;
    border-width: 1px 0;
  }
  td:first-child {
    border-left-width: 1px;
    border-radius: 3px 0 0 3px;
  }
`;

const NameCell = styled.div`
  display: flex;
  align-items: center;
  height: 44px;
  padding: 3px 0 0 9px;
  font-size: 15px;
  font-weight: 700;
  border-right: 1px solid #c2c2c2;
`;

const Expand = styled.button`
  margin: 0 15px 4px 0;
`;

const TypeCell = styled.td`
  && {
    padding-left: 25px;
  }
`;

const MissingCell = styled.td`
  && {
    padding-bottom: 3px;
  }
`;

const StatCell = styled.td`
  vertical-align: top;
  white-space: nowrap;

  small {
    display: block;
    margin-top: 6px;
    color: #8a8a8a;
    font-size: 10px;
    line-height: 14px;
  }
  span {
    display: block;
    font-size: 14px;
    line-height: 18px;
  }
`;

const BottomScroll = styled.div`
  padding-right: 16px;
  border-top: 1px solid #bcbcbc;
`;

const ScrollTrack = styled.div`
  display: flex;
  flex: none;
  flex-direction: ${({ $vertical }) => ($vertical ? 'column' : 'row')};
  ${({ $vertical }) => ($vertical ? 'width: 16px;' : 'height: 15px;')}
  background: #e8ebea;
`;

const ScrollEnd = styled.button`
  display: flex;
  align-items: center;
  justify-content: center;
  min-width: 16px;
  min-height: 15px;
  padding: 1px;

  ${ScrollTrack} > &:first-child {
    min-width: 17px;
    min-height: 17px;
  }
`;

const ScrollThumb = styled.div`
  display: flex;
  flex: ${({ $size }) => $size} 0 0;
  align-items: center;
  justify-content: center;
  background: #c5c7c6;
`;

const ScrollRest = styled.div`
  flex: ${({ $size }) => $size} 0 0;
`;

const Grip = styled.div`
  width: ${({ $vertical }) => ($vertical ? 11 : 8)}px;
  height: ${({ $vertical }) => ($vertical ? 8 : 11)}px;
  background: repeating-linear-gradient(
    ${({ $vertical }) => ($vertical ? '180deg' : '90deg')},
    #999 0 1px,
    transparent 1px 2px
  );
`;

const Summary = styled.footer`
  display: flex;
  align-items: center;
  gap: 12px;
  height: 28px;
  padding: 0 11px 2px 10px;
  border-top: 1px solid #bcbcbc;

  span:first-child {
    margin-right: auto;
  }
`;

const RepositoryPanel = styled.div`
  display: flex;
  flex: 1;
  flex-direction: column;
  min-height: 0;
  background: #e8ebea;
  border: 1px solid #bcbcbc;
  border-radius: 0 0 3px 3px;
`;

const RepositoryTools = styled.div`
  display: flex;
  gap: 4px;
  padding: 7px;
  border-bottom: 1px solid #bcbcbc;
`;

const AddButton = styled.button`
  ${raised}
  display: flex;
  flex: 1;
  align-items: center;
  justify-content: center;
  gap: 4px;
  height: 30px;
  padding-bottom: 2px;
`;

const MenuButton = styled.button`
  ${raised}
  display: flex;
  align-items: center;
  justify-content: center;
  gap: 8px;
  width: 50px;
  padding-left: 4px;
`;

const Tree = styled.ul`
  flex: 1;
  margin: 0;
  padding: 1px 0 0;
  overflow: hidden;
  list-style: none;
  border-bottom: 1px solid #bcbcbc;
`;

const TreeRow = styled.li`
  display: flex;
  align-items: center;
  height: 24px;
  padding-left: ${({ $child }) => ($child ? 30 : 3)}px;
  white-space: nowrap;
`;

const TreeIcon = styled.span`
  display: flex;
  justify-content: center;
  width: 16px;
  margin: 0 4px;
`;

const Note = styled.span`
  margin-left: 4px;
  color: #8a8a8a;
  font-size: 11px;
`;

const SelectedEntry = styled.span`
  flex: 1;
  overflow: hidden;
  line-height: 24px;
  background: #b0d5ff;
`;

const StatusBar = styled.div`
  display: flex;
  justify-content: flex-end;
  height: 26px;
  padding: 5px 3px 4px;

  div {
    width: 164px;
    background: #f6f6f6;
    border: 1px solid #dcdcdc;
    border-radius: 2px;
  }
`;

const Taskbar = styled.footer`
  display: flex;
  height: 40px;
  color: #fff;
  background: linear-gradient(90deg, #0c0c0c, #333 300px, #363636 75%, #262626);
`;

const SystemButtons = styled.div`
  display: flex;
  width: 146px;

  button {
    display: flex;
    align-items: center;
    justify-content: center;
    width: 48px;
  }
`;

const Tasks = styled.div`
  display: flex;
  flex: 1;
`;

const Task = styled.button`
  display: flex;
  flex: 1 0 0;
  align-items: center;
  justify-content: center;
  margin: 0 ${({ $active }) => ($active ? 1 : 4)}px;
  background: ${({ $active }) => ($active ? '#6c6c6c' : 'transparent')};
  box-shadow: ${({ $running }) => ($running ? 'inset 0 -2px #76b9ed' : 'none')};
  ${({ $active }) => $active && 'flex-basis: 6px;'}
`;

const Tray = styled.div`
  display: flex;
  align-items: center;
  width: 305px;
  padding-right: 4px;
  font: 12px/19px Roboto, 'Open Sans', sans-serif;
`;

const People = styled.div`
  width: 62px;
  padding-left: 25px;
`;

const TrayIcons = styled.div`
  display: flex;
  align-items: center;
  gap: 9px;
  width: 96px;
`;

const Clock = styled.div`
  display: flex;
  flex-direction: column;
  align-items: center;
  width: 74px;
`;

const Notifications = styled.button`
  display: flex;
  align-items: center;
  justify-content: flex-end;
  flex: 1;
  height: 100%;
  padding: 5px 12px 0 0;
  border-right: 1px solid #6a6a6a;
`;

export default App;
